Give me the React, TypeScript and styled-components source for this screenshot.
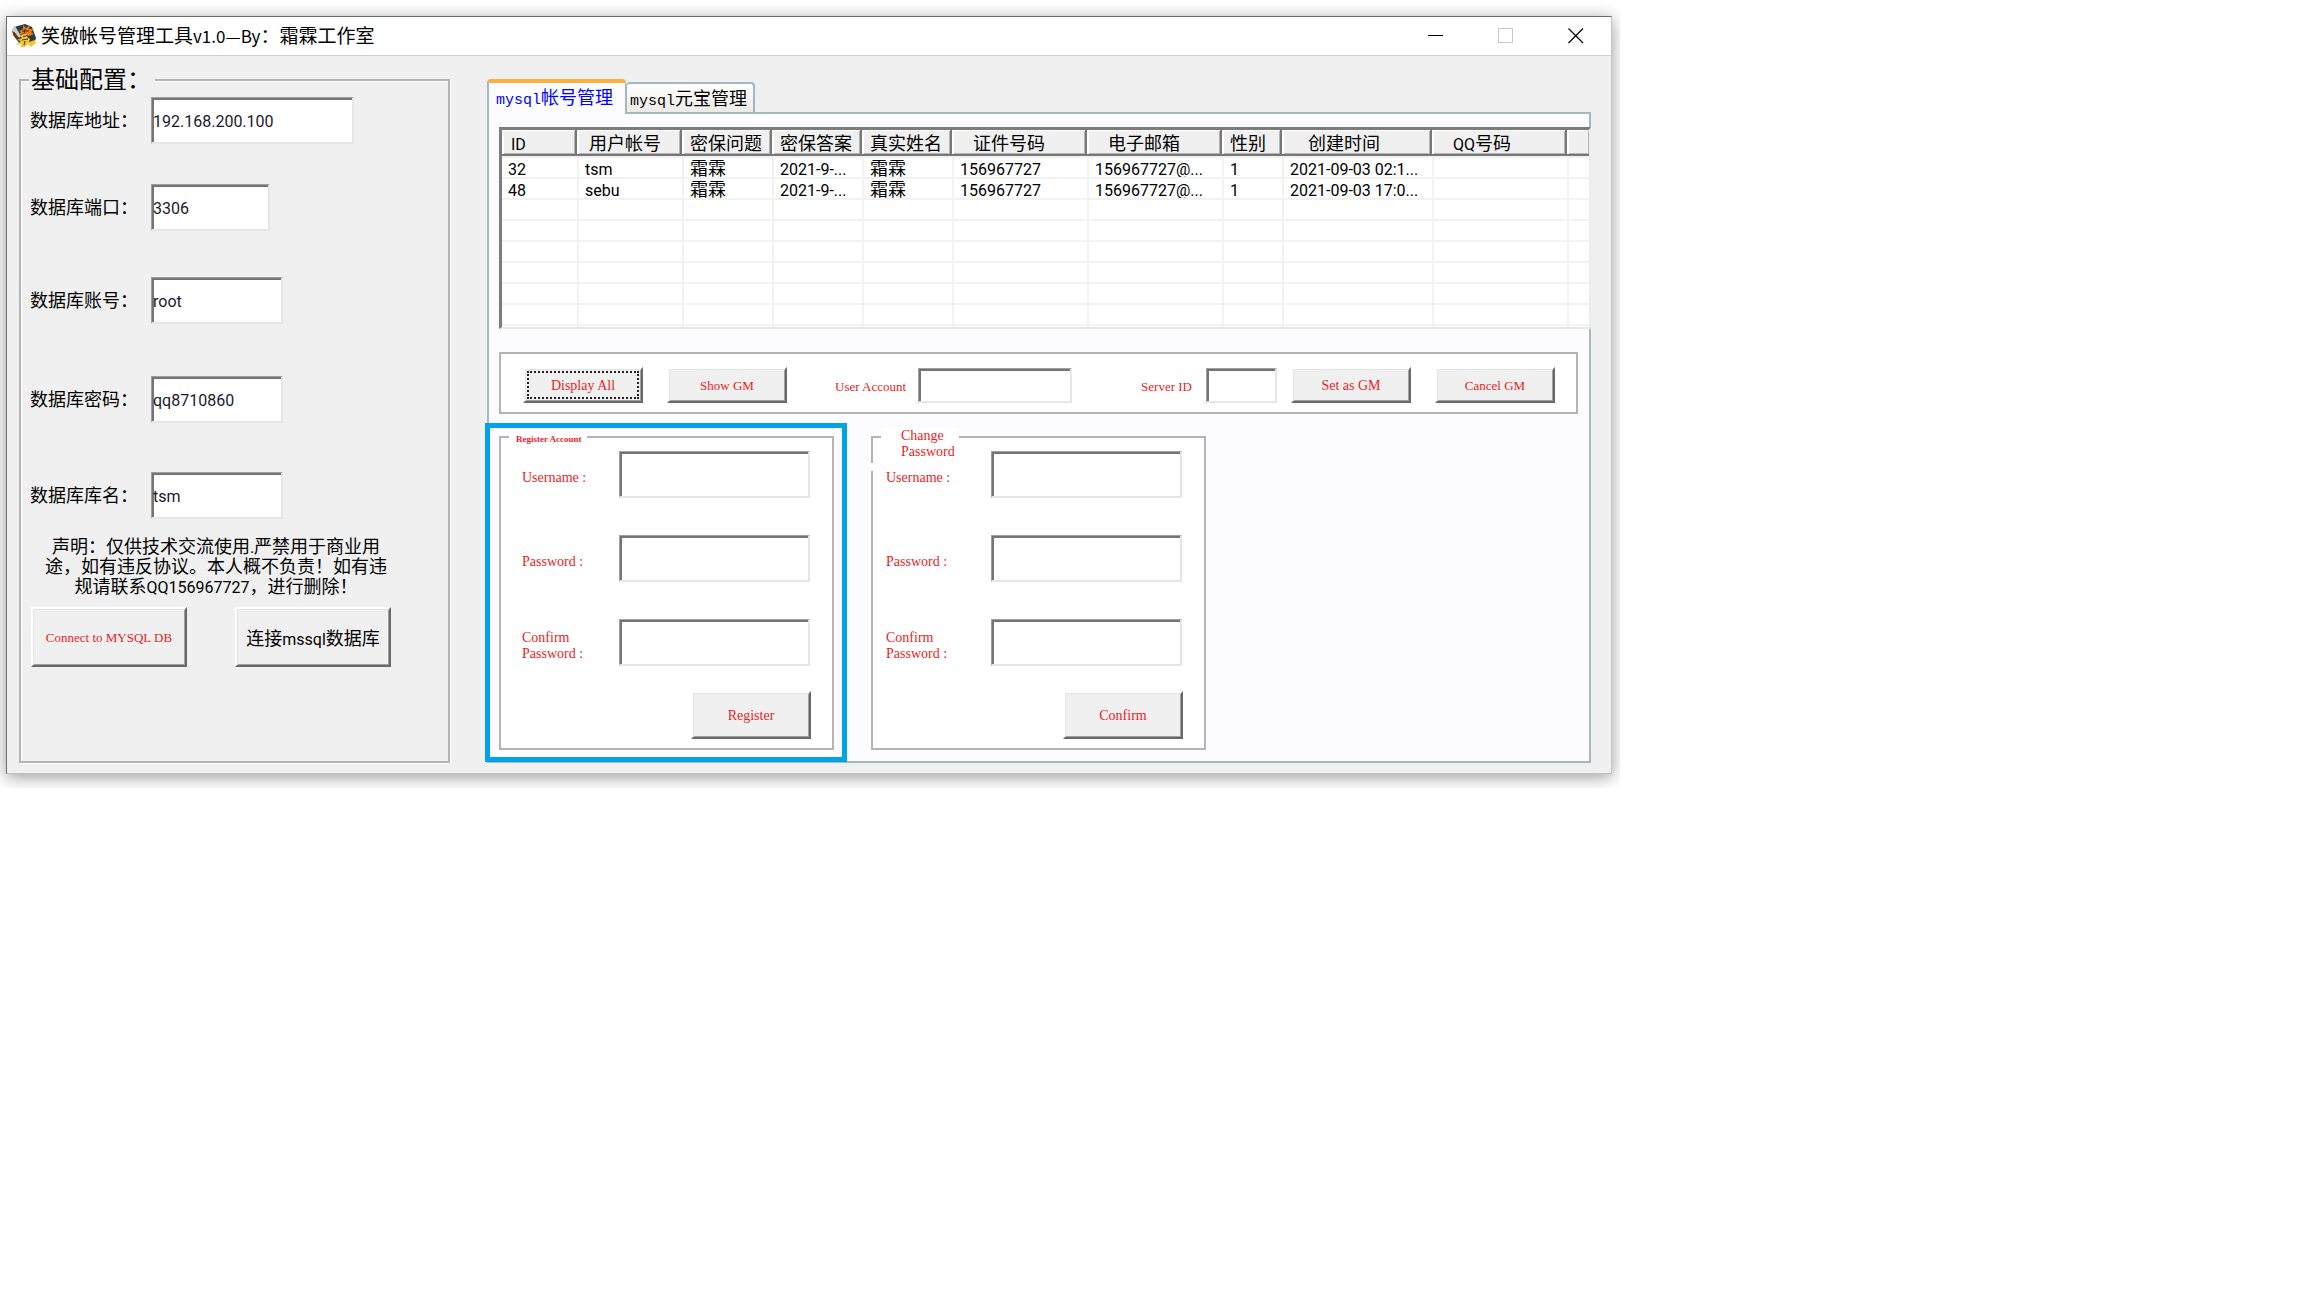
import React, { useId, useState } from "react";
import styled, { createGlobalStyle, css } from "styled-components";

const CJK = `"Noto Sans CJK SC", sans-serif`;
const LATIN = `Roboto, ${CJK}`;
const SERIF = `"Liberation Serif", serif`;

const color = {
  face: "#f0f0f0",
  red: "#ed1c24",
  group: "#b4b4b4",
  tabLine: "#a3b8c4",
  page: "#fcfcfe",
  mark: "#00a2e8",
};

const GlobalStyle = createGlobalStyle`
  *, *::before, *::after { box-sizing: border-box; }
  body { margin: 0; background: #fff; font-family: ${CJK}; color: #000; }
`;

/* ---------- window frame ---------- */

const Desktop = styled.div`
  width: 100%;
  max-width: 1620px;
  padding: 16px 8px 14px 6px;
  overflow: hidden;
`;

const Window = styled.main`
  border: 1px solid #6b6b6b;
  border-right-color: #c4c4c4;
  border-bottom-color: #c0c0c0;
  background: ${color.face};
  box-shadow: 0 3px 16px rgba(0, 0, 0, 0.4);
`;

const TitleBar = styled.header`
  display: flex;
  align-items: center;
  height: 39px;
  padding-left: 4px;
  background: #fff;
  border-bottom: 1px solid #d0d0d0;
`;

const Title = styled.h1`
  flex: 1;
  margin: 0 0 2px 4px;
  font-size: 19px;
  line-height: 24px;
  font-weight: 400;
  white-space: nowrap;
`;

const TitleLatin = styled.span`
  font-size: 17px;
`;

const CaptionButton = styled.button`
  display: grid;
  place-items: center;
  width: 70px;
  height: 38px;
  padding: 0;
  border: 0;
  background: none;
  color: #000;
  &:disabled { color: #c8c8c8; }
`;

const Body = styled.div`
  display: flex;
  gap: 37px;
  padding: 23px 20px 10px 12px;
`;

/* ---------- shared controls ---------- */

const TextBox = styled.input<{ $w?: number; $h?: number }>`
  width: ${(p) => p.$w ?? 191}px;
  height: ${(p) => p.$h ?? 47}px;
  padding: 2px 2px 0 1px;
  border: 1px solid #a0a0a0;
  border-right: 2px solid #e6e6e6;
  border-bottom: 2px solid #e6e6e6;
  border-radius: 0;
  box-shadow: inset 2px 2px 0 #747474;
  background: #fff;
  outline: none;
  font: 16px ${LATIN};
  color: #1a1a2a;
`;

const PushButton = styled.button<{ $w?: number; $h?: number; $size?: number; $focused?: boolean }>`
  width: ${(p) => p.$w ?? 120}px;
  height: ${(p) => p.$h ?? 36}px;
  flex: none;
  padding: 2px 0 0;
  border: 2px solid;
  border-color: #fff #696969 #696969 #fff;
  border-radius: 0;
  box-shadow: inset 1px 1px 0 #e3e3e3, inset -1px -1px 0 #a0a0a0;
  background: ${color.face};
  color: ${color.red};
  font: ${(p) => p.$size ?? 13}px/16px ${SERIF};
  white-space: nowrap;
  ${(p) => p.$focused && css`outline: 2px dotted #222; outline-offset: -6px;`}
`;

const PlainButton = styled(PushButton)`
  color: #000;
  font: 18px/20px ${CJK};
  padding: 0;
`;

const Latin = styled.span`
  font-family: ${LATIN};
  font-size: 16px;
  line-height: 14px;
`;

const Group = styled.fieldset`
  position: relative;
  min-width: 0;
  margin: 0;
  padding: 0;
  border: 2px solid ${color.group};
`;

/* ---------- configuration ---------- */

const ConfigGroup = styled(Group)`
  flex: none;
  width: 431px;
  padding: 16px 0 0 9px;
  box-shadow: inset 1px 1px 0 #fff, 1px 1px 0 #fff;
`;

const ConfigLegend = styled.legend`
  position: absolute;
  top: -19px;
  left: 8px;
  width: 126px;
  padding: 0 0 0 2px;
  background: ${color.face};
  font-size: 24px;
  line-height: 32px;
`;

const ConfigRows = styled.div`
  display: grid;
  grid-template-rows: 87px 93px 99px 96px 47px;
`;

const ConfigRow = styled.div`
  display: grid;
  grid-template-columns: 121px auto;
  justify-content: start;
  align-items: center;
  height: 47px;
`;

const ConfigLabel = styled.label`
  padding-bottom: 4px;
  font-size: 18px;
  line-height: 20px;
  white-space: nowrap;
`;

const Notice = styled.p`
  width: 372px;
  margin: 16px 0 12px;
  font-size: 18px;
  line-height: 20px;
  text-align: center;
  white-space: nowrap;
`;

const ConnectRow = styled.div`
  display: flex;
  gap: 48px;
  padding-left: 1px;
`;

/* ---------- tabs ---------- */

const TabArea = styled.section`
  flex: 1;
  min-width: 0;
  display: flex;
  flex-direction: column;
`;

const TabList = styled.div`
  display: flex;
  align-items: flex-end;
  height: 33px;
`;

const Tab = styled.button<{ $active: boolean }>`
  width: ${(p) => (p.$active ? 139 : 129)}px;
  height: ${(p) => (p.$active ? 35 : 30)}px;
  padding: 0 0 0 ${(p) => (p.$active ? 7 : 3)}px;
  border: 2px solid ${color.tabLine};
  border-bottom: 0;
  border-left-width: ${(p) => (p.$active ? 2 : 1)}px;
  border-radius: 4px 4px 0 0;
  background: linear-gradient(#fff, #ecebe6);
  color: #000;
  font: 18px/20px ${CJK};
  text-align: left;
  white-space: nowrap;
  ${(p) =>
    p.$active &&
    css`
      position: relative;
      margin-bottom: -2px;
      padding-bottom: 4px;
      border-top: 4px solid #fbb03b;
      border-right-width: 1px;
      background: ${color.page};
      color: #0000ff;
    `}
`;

const TabLatin = styled.span`
  font-family: "Liberation Mono", monospace;
  font-size: 15px;
  line-height: 14px;
`;

const TabPage = styled.div`
  flex: 1;
  display: flex;
  flex-direction: column;
  padding: 13px 11px 11px 10px;
  border: 2px solid ${color.tabLine};
  background: ${color.page};
`;

/* ---------- account list ---------- */

const ListBox = styled.div`
  height: 202px;
  margin-right: -13px;
  overflow: hidden;
  border: 3px solid #7c7c7c;
  border-right: 2px solid #ececec;
  border-bottom: 2px solid #e6e6e6;
  background: #fff;
`;

const ListTable = styled.table`
  width: 100%;
  table-layout: fixed;
  border-collapse: separate;
  border-spacing: 0;
  text-align: left;
`;

const HeadCell = styled.th<{ $indent: number }>`
  height: 26px;
  padding: 0 0 0 ${(p) => p.$indent}px;
  border-right: 2px solid #787878;
  border-bottom: 2px solid #787878;
  box-shadow: inset 2px 1px 0 #fff, inset -1px -1px 0 #b4b4b4;
  background: ${color.face};
  font-size: 18px;
  line-height: 20px;
  font-weight: 400;
  overflow: hidden;
  white-space: nowrap;
  &:last-child { border-right: 0; }
`;

const Cell = styled.td`
  height: 21px;
  padding: 0 0 0 6px;
  border-top: 2px solid #f2f2f2;
  border-left: 2px solid #f2f2f2;
  font: 18px/19px ${CJK};
  overflow: hidden;
  white-space: nowrap;
  &:first-child { border-left: 0; }
`;

/* ---------- GM toolbar ---------- */

const GmGroup = styled(Group)`
  margin: 23px 0 22px;
  padding: 13px 21px 9px 22px;
  background: #fff;
`;

const GmBar = styled.div`
  display: flex;
  justify-content: space-between;
`;

const BarCluster = styled.div<{ $gap: number }>`
  display: flex;
  align-items: center;
  gap: ${(p) => p.$gap}px;
`;

const RedLabel = styled.label<{ $size?: number }>`
  padding-top: 3px;
  color: ${color.red};
  font: ${(p) => p.$size ?? 13}px/16px ${SERIF};
  white-space: pre-line;
`;

/* ---------- account forms ---------- */

const Forms = styled.div`
  display: flex;
  gap: 37px;
`;

const Highlight = styled.div`
  position: relative;
  &::after {
    content: "";
    position: absolute;
    inset: -13px -13px -12px -14px;
    border: 5px solid ${color.mark};
    pointer-events: none;
  }
`;

const FormGroup = styled(Group)<{ $inset: number }>`
  width: 335px;
  padding: 13px 22px 9px ${(p) => p.$inset}px;
  background: #fff;
`;

const BrokenFormGroup = styled(FormGroup)`
  &::before {
    content: "";
    position: absolute;
    top: 25px;
    left: -5px;
    width: 8px;
    height: 8px;
    background: #fff;
  }
`;

const FormLegend = styled.legend<{ $small?: boolean }>`
  position: absolute;
  top: ${(p) => (p.$small ? -6 : -10)}px;
  left: 8px;
  width: 78px;
  padding: 0 0 0 ${(p) => (p.$small ? 7 : 20)}px;
  background: #fff;
  color: ${color.red};
  font: ${(p) => (p.$small ? "bold 9px/14px" : "14px/16px")} ${SERIF};
`;

const FormRows = styled.div`
  display: grid;
  gap: 37px;
`;

const FormRow = styled.div`
  display: flex;
  align-items: center;
  justify-content: space-between;
`;

const FormLabel = styled(RedLabel)`
  padding-top: 7px;
`;

const FormFooter = styled.div`
  display: flex;
  justify-content: flex-end;
  margin: 25px -1px 0 0;
`;

/* ---------- data ---------- */

const configFields = [
  { label: "数据库地址：", value: "192.168.200.100", width: 203 },
  { label: "数据库端口：", value: "3306", width: 119 },
  { label: "数据库账号：", value: "root", width: 132 },
  { label: "数据库密码：", value: "qq8710860", width: 132 },
  { label: "数据库库名：", value: "tsm", width: 132 },
];

const columns = [
  { title: "ID", width: 75, indent: 9 },
  { title: "用户帐号", width: 105, indent: 12 },
  { title: "密保问题", width: 90, indent: 8 },
  { title: "密保答案", width: 90, indent: 8 },
  { title: "真实姓名", width: 90, indent: 8 },
  { title: "证件号码", width: 135, indent: 21 },
  { title: "电子邮箱", width: 135, indent: 21 },
  { title: "性别", width: 60, indent: 8 },
  { title: "创建时间", width: 150, indent: 26 },
  { title: "QQ号码", width: 135, indent: 21 },
  { title: "", width: 0, indent: 0 },
];

const accounts = [
  ["32", "tsm", "霜霖", "2021-9-...", "霜霖", "156967727", "156967727@...", "1", "2021-09-03 02:1...", "", ""],
  ["48", "sebu", "霜霖", "2021-9-...", "霜霖", "156967727", "156967727@...", "1", "2021-09-03 17:0...", "", ""],
];

const LIST_ROWS = 9;

/** Sets runs of Latin text in the Latin face and leaves Chinese text as it is. */
function Mixed({ text }: { text: string }) {
  return (
    <>
      {text
        .split(/([\x20-\x7e]+)/)
        .filter(Boolean)
        .map((part, i) => (/^[\x20-\x7e]/.test(part) ? <Latin key={i}>{part}</Latin> : part))}
    </>
  );
}

function AppIcon() {
  return (
    <svg width="26" height="26" viewBox="0 0 26 26" aria-hidden="true">
      <path d="M3 4 L14 1 L21 4 L25 15 L24 18 L16 21 L8 20 L3 13 Z" fill="#2a3d45" />
      <path d="M1 6 L4 3 L10 13 L8 15 Z" fill="#c9cdc8" />
      <path d="M1 7 L8 15 L7 18 L2 12 Z" fill="#6b3517" />
      <path d="M8 8 L12 6 L12 2 L15 5 L19 2 L18 6 L23 6 L20 9 L23 11 L18 13 L13 11 L8 12 L10 9 Z" fill="#e87a1a" />
      <path d="M9 13 L13 11 L18 11 L16 14 L19 16 L18 19 L24 17 L25 20 L20 24 L17 21 L14 24 L9 24 L11 21 L5 22 L10 18 L6 17 L11 15 Z" fill="#f5c533" />
      <path d="M11 8 L18 8 M14 6 L13 11 M12 14 L17 12 M11 17 L17 16 M14 18 L13 22" stroke="#4a260c" strokeWidth="1" fill="none" />
    </svg>
  );
}

function Config() {
  const id = useId();
  return (
    <ConfigGroup>
      <ConfigLegend>基础配置：</ConfigLegend>
      <ConfigRows>
        {configFields.map((f, i) => (
          <ConfigRow key={f.label}>
            <ConfigLabel htmlFor={`${id}${i}`}>{f.label}</ConfigLabel>
            <TextBox id={`${id}${i}`} $w={f.width} defaultValue={f.value} />
          </ConfigRow>
        ))}
      </ConfigRows>
      <Notice>
        声明：仅供技术交流使用<Latin>.</Latin>严禁用于商业用
        <br />
        途，如有违反协议。本人概不负责！如有违
        <br />
        规请联系<Latin>QQ156967727</Latin>，进行删除！
      </Notice>
      <ConnectRow>
        <PushButton type="button" $w={156} $h={60}>Connect to MYSQL DB</PushButton>
        <PlainButton type="button" $w={156} $h={60}>
          <Mixed text="连接mssql数据库" />
        </PlainButton>
      </ConnectRow>
    </ConfigGroup>
  );
}

function AccountList() {
  const rows = Array.from({ length: LIST_ROWS }, (_, i) => accounts[i] ?? columns.map(() => ""));
  return (
    <ListBox>
      <ListTable>
        <colgroup>
          {columns.map((c, i) => (
            <col key={i} width={c.width || undefined} />
          ))}
        </colgroup>
        <thead>
          <tr>
            {columns.map((c, i) => (
              <HeadCell key={i} scope="col" $indent={c.indent}>
                <Mixed text={c.title} />
              </HeadCell>
            ))}
          </tr>
        </thead>
        <tbody>
          {rows.map((row, r) => (
            <tr key={r}>
              {row.map((text, c) => (
                <Cell key={c}>
                  <Mixed text={text} />
                </Cell>
              ))}
            </tr>
          ))}
        </tbody>
      </ListTable>
    </ListBox>
  );
}

function GmToolbar() {
  const id = useId();
  return (
    <GmGroup aria-label="GM">
      <GmBar>
        <BarCluster $gap={48}>
          <BarCluster $gap={24}>
            <PushButton type="button" $size={14} $focused>Display All</PushButton>
            <PushButton type="button">Show GM</PushButton>
          </BarCluster>
          <BarCluster $gap={12}>
            <RedLabel htmlFor={`${id}user`}>User Account</RedLabel>
            <TextBox id={`${id}user`} $w={154} $h={35} />
          </BarCluster>
        </BarCluster>
        <BarCluster $gap={14}>
          <RedLabel htmlFor={`${id}server`}>Server ID</RedLabel>
          <TextBox id={`${id}server`} $w={71} $h={35} />
          <BarCluster $gap={24}>
            <PushButton type="button" $size={14}>Set as GM</PushButton>
            <PushButton type="button">Cancel GM</PushButton>
          </BarCluster>
        </BarCluster>
      </GmBar>
    </GmGroup>
  );
}

function FormFields({ labels, action }: { labels: string[]; action: string }) {
  const id = useId();
  return (
    <>
      <FormRows>
        {labels.map((label, i) => (
          <FormRow key={label}>
            <FormLabel $size={14} htmlFor={`${id}${i}`}>{label}</FormLabel>
            <TextBox id={`${id}${i}`} type={i === 0 ? "text" : "password"} />
          </FormRow>
        ))}
      </FormRows>
      <FormFooter>
        <PushButton type="button" $h={48} $size={14}>{action}</PushButton>
      </FormFooter>
    </>
  );
}

const fieldLabels = ["Username :", "Password :", "Confirm\nPassword :"];

export default function App() {
  const [tab, setTab] = useState(0);
  const tabs = ["帐号管理", "元宝管理"];
  return (
    <>
      <GlobalStyle />
      <Desktop>
        <Window>
          <TitleBar>
            <AppIcon />
            <Title>
              笑傲帐号管理工具<TitleLatin>v1.0—By</TitleLatin>：霜霖工作室
            </Title>
            <CaptionButton type="button" aria-label="Minimize">
              <svg width="16" height="16" viewBox="0 0 16 16"><path d="M0 7.5H15" stroke="currentColor" /></svg>
            </CaptionButton>
            <CaptionButton type="button" aria-label="Maximize" disabled>
              <svg width="16" height="16" viewBox="0 0 16 16"><rect x="0.5" y="0.5" width="14" height="14" fill="none" stroke="currentColor" /></svg>
            </CaptionButton>
            <CaptionButton type="button" aria-label="Close">
              <svg width="16" height="16" viewBox="0 0 16 16"><path d="M0.5 0.5L15 15M15 0.5L0.5 15" stroke="currentColor" strokeWidth="1.2" /></svg>
            </CaptionButton>
          </TitleBar>
          <Body>
            <Config />
            <TabArea>
              <TabList role="tablist">
                {tabs.map((name, i) => (
                  <Tab key={name} type="button" role="tab" aria-selected={tab === i} $active={tab === i} onClick={() => setTab(i)}>
                    <TabLatin>mysql</TabLatin>
                    {name}
                  </Tab>
                ))}
              </TabList>
              <TabPage role="tabpanel">
                <AccountList />
                <GmToolbar />
                <Forms>
                  <Highlight>
                    <FormGroup $inset={21}>
                      <FormLegend $small>Register Account</FormLegend>
                      <FormFields labels={fieldLabels} action="Register" />
                    </FormGroup>
                  </Highlight>
                  <BrokenFormGroup $inset={13}>
                    <FormLegend>Change Password</FormLegend>
                    <FormFields labels={fieldLabels} action="Confirm" />
                  </BrokenFormGroup>
                </Forms>
              </TabPage>
            </TabArea>
          </Body>
        </Window>
      </Desktop>
    </>
  );
}
